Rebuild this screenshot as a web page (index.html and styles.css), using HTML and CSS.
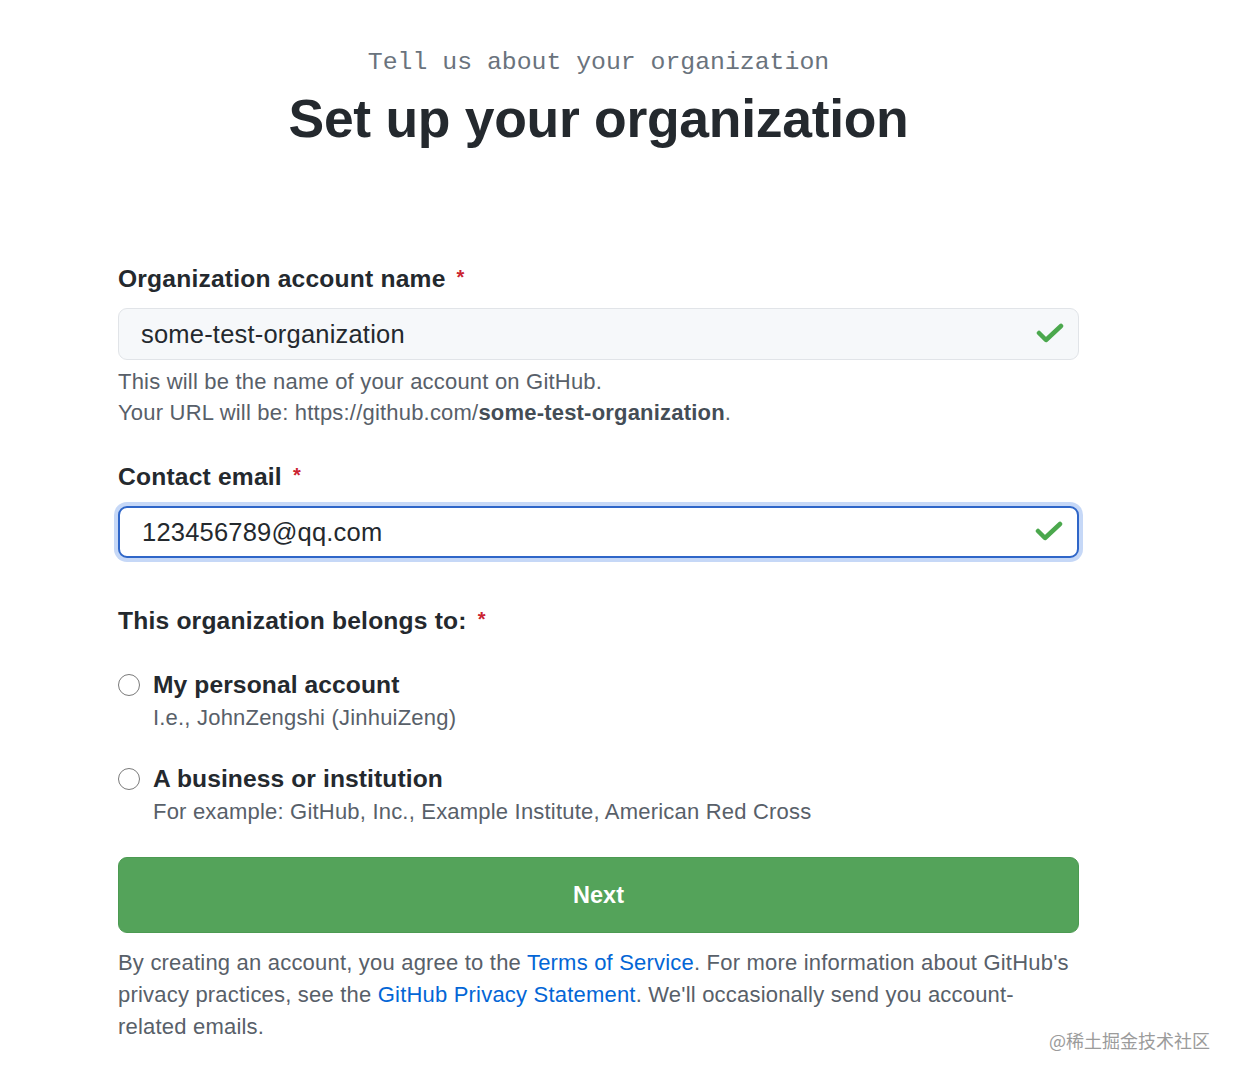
FILE: index.html
```html
<!DOCTYPE html>
<html lang="en">
<head>
<meta charset="utf-8">
<title>Set up your organization</title>
<link rel="stylesheet" href="styles.css">
</head>
<body>
<main class="page">
  <header class="head">
    <p class="eyebrow">Tell us about your organization</p>
    <h1 class="title">Set up your organization</h1>
  </header>

  <form class="form">
    <div class="field">
      <label class="label">Organization account name <span class="req">*</span></label>
      <div class="input">
        <span class="value">some-test-organization</span>
        <svg class="check" viewBox="0 0 28 22" width="28" height="22"><polyline points="3,11 10,18 25,4"/></svg>
      </div>
      <p class="note">This will be the name of your account on GitHub.<br>Your URL will be: https://github.com/<strong>some-test-organization</strong>.</p>
    </div>

    <div class="field field-email">
      <label class="label">Contact email <span class="req">*</span></label>
      <div class="input input-focus">
        <span class="value">123456789@qq.com</span>
        <svg class="check" viewBox="0 0 28 22" width="28" height="22"><polyline points="3,11 10,18 25,4"/></svg>
      </div>
    </div>

    <fieldset class="belongs">
      <legend class="label">This organization belongs to: <span class="req">*</span></legend>
      <div class="option">
        <span class="radio"></span>
        <div class="opt-text">
          <div class="opt-title">My personal account</div>
          <div class="opt-sub">I.e., JohnZengshi (JinhuiZeng)</div>
        </div>
      </div>
      <div class="option option-2">
        <span class="radio"></span>
        <div class="opt-text">
          <div class="opt-title">A business or institution</div>
          <div class="opt-sub">For example: GitHub, Inc., Example Institute, American Red Cross</div>
        </div>
      </div>
    </fieldset>

    <button type="button" class="next">Next</button>

    <p class="legal">By creating an account, you agree to the <a href="#">Terms of Service</a>. For more information about GitHub's privacy practices, see the <a href="#">GitHub Privacy Statement</a>. We'll occasionally send you account-related emails.</p>
  </form>
  <div class="watermark">@稀土掘金技术社区</div>
</main>
</body>
</html>
```

FILE: styles.css
```css
* { box-sizing: border-box; }
html, body { margin: 0; padding: 0; background: #fff; }
body {
  font-family: "Liberation Sans", Arial, "Noto Sans CJK SC", sans-serif;
  color: #24292e;
}
.page {
  width: 961px;
  margin-left: 118px;
  padding-top: 46px;
  position: relative;
  min-height: 1080px;
}
.head { text-align: center; }
.eyebrow {
  margin: 0;
  font-family: "Liberation Mono", "DejaVu Sans Mono", monospace;
  font-size: 24.8px;
  line-height: 32px;
  color: #6a737d;
}
.title {
  margin: 8px 0 0;
  font-size: 53.5px;
  line-height: 66px;
  font-weight: 700;
  letter-spacing: -0.3px;
  color: #24292e;
}
.form { margin-top: 110px; }
.label {
  display: block;
  font-size: 24.6px;
  line-height: 30px;
  font-weight: 700;
  color: #24292e;
  padding: 0;
  letter-spacing: 0.2px;
}
.req {
  color: #cb2431;
  font-size: 20px;
  margin-left: 4px;
  vertical-align: 3px;
}
.input {
  margin-top: 14px;
  height: 52px;
  border: 1.5px solid #e1e4e8;
  border-radius: 9px;
  background: #f6f8fa;
  display: flex;
  align-items: center;
  justify-content: space-between;
  padding: 0 14px 0 22px;
}
.value { font-size: 25.5px; color: #24292e; letter-spacing: 0.2px; }
.check {
  fill: none;
  stroke: #4ba84d;
  stroke-width: 4.5;
  stroke-linecap: round;
  stroke-linejoin: round;
  margin-top: -2px;
}
.input-focus {
  background: #fff;
  border: 2px solid #2f66c8;
  box-shadow: 0 0 0 4px #c6d8f7;
}
.note {
  margin: 6px 0 0;
  font-size: 22px;
  line-height: 31px;
  color: #586069;
  letter-spacing: 0.2px;
}
.note strong { color: #444d56; }
.field-email { margin-top: 32px; }
.belongs {
  border: 0;
  margin: 46px 0 0;
  padding: 0;
}
.belongs legend { margin-bottom: 34px; }
.option { display: flex; gap: 13px; align-items: flex-start; }
.option-2 { margin-top: 31px; }
.radio {
  width: 22px; height: 22px;
  border: 1.5px solid #7a7a7a;
  border-radius: 50%;
  margin-top: 4px;
  flex: none;
  background: #fff;
}
.opt-title { font-size: 24.6px; line-height: 30px; font-weight: 700; color: #24292e; letter-spacing: 0.1px; }
.opt-sub { font-size: 22px; line-height: 30px; margin-top: 3px; color: #586069; letter-spacing: 0.2px; }
.next {
  display: block;
  width: 100%;
  margin-top: 30px;
  height: 76px;
  border: 1px solid #4c9a52;
  border-radius: 9px;
  background: #54a35a;
  color: #fff;
  font-family: inherit;
  font-size: 23.5px;
  font-weight: 700;
}
.legal {
  margin: 14px 0 0;
  font-size: 22px;
  line-height: 32px;
  color: #586069;
  letter-spacing: 0.2px;
}
.legal a { color: #0366d6; text-decoration: none; }
.watermark {
  position: absolute;
  right: -131px;
  top: 1027px;
  font-size: 18px;
  color: #9b9b9b;
  font-family: "Noto Sans CJK SC", sans-serif;
}
```
